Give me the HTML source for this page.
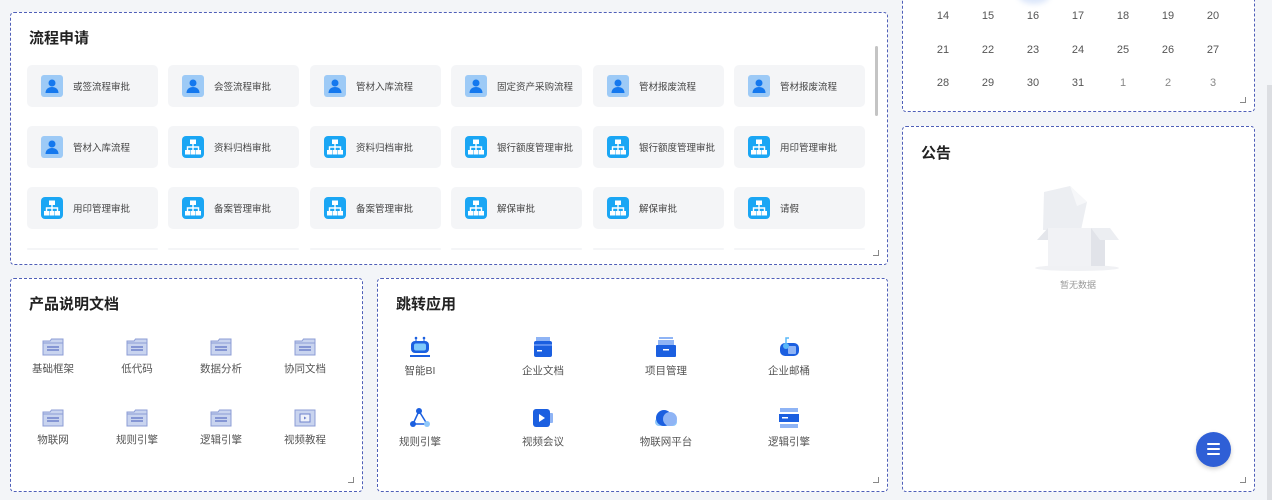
<!DOCTYPE html>
<html><head><meta charset="utf-8"><style>
*{box-sizing:border-box;margin:0;padding:0}
body{width:1272px;height:500px;overflow:hidden;background:#f3f5f8;font-family:"Liberation Sans","Noto Sans CJK SC",sans-serif;position:relative}
.p{position:absolute;background:#fff;border:1px dashed #4f5fb8;border-radius:4px}
.t{position:absolute;font-size:15px;font-weight:bold;color:#222}
.c{position:absolute;width:131px;height:42px;background:#f4f5f7;border-radius:5px}
.c svg{position:absolute;left:14px;top:10px}
.c span{position:absolute;left:46px;top:14px;font-size:9.5px;color:#444;white-space:nowrap}
.it{position:absolute;width:80px;text-align:center}
.it svg{display:block;margin:0 auto}
.it span{display:block;margin-top:5px;font-size:10.5px;color:#555}
.d{position:absolute;font-size:11px;color:#555;width:30px;text-align:center}
.cr{position:absolute;width:6px;height:6px;border-right:1px solid #888;border-bottom:1px solid #888}
</style></head><body>
<svg width="0" height="0" style="position:absolute"><defs>
<symbol id="u" viewBox="0 0 22 22"><rect width="22" height="22" rx="3" fill="#9dcaf6"/><circle cx="11" cy="8" r="3.5" fill="#1478ee"/><path d="M4.5 18c0-4 3-6 6.5-6s6.5 2 6.5 6z" fill="#1478ee"/></symbol>
<symbol id="o" viewBox="0 0 22 22"><rect width="22" height="22" rx="4" fill="#1aa6f4"/><rect x="8" y="3.5" width="6" height="4.5" fill="#fff"/><path d="M11 8v3M5.5 14v-3h11v3M11 11v3" stroke="#fff" stroke-width="1.4" fill="none"/><rect x="3" y="14" width="5" height="4.5" fill="#fff"/><rect x="8.5" y="14" width="5" height="4.5" fill="#fff"/><rect x="14" y="14" width="5" height="4.5" fill="#fff"/></symbol>
<symbol id="f" viewBox="0 0 22 18"><path d="M1 3h7l1.5-2H21v16H1z" fill="#c9d4ef" stroke="#8c9cd6" stroke-width="1"/><path d="M1 5h20" stroke="#8c9cd6"/><path d="M5 9h12M5 12h12" stroke="#6f82cc" stroke-width="1.4"/></symbol>
<symbol id="v" viewBox="0 0 22 18"><rect x="1" y="1" width="20" height="16" fill="#c9d4ef" stroke="#8c9cd6"/><rect x="6" y="5" width="10" height="8" fill="#eef1fa" stroke="#6f82cc"/><path d="M10 7.5v3l2.5-1.5z" fill="#6f82cc"/></symbol>
</defs></svg>

<div class="p" style="left:10px;top:12px;width:878px;height:253px;overflow:hidden">
<div class="t" style="left:18px;top:14px">流程申请</div>
<div style="position:absolute;left:864px;top:33px;width:3px;height:70px;background:#c4c4c4;border-radius:2px"></div>
<div class="cr" style="right:8px;bottom:8px"></div>
</div>
<div class="c" style="left:27px;top:65px"><svg width="22" height="22"><use href="#u"/></svg><span>或签流程审批</span></div>
<div class="c" style="left:168px;top:65px"><svg width="22" height="22"><use href="#u"/></svg><span>会签流程审批</span></div>
<div class="c" style="left:310px;top:65px"><svg width="22" height="22"><use href="#u"/></svg><span>管材入库流程</span></div>
<div class="c" style="left:451px;top:65px"><svg width="22" height="22"><use href="#u"/></svg><span>固定资产采购流程</span></div>
<div class="c" style="left:593px;top:65px"><svg width="22" height="22"><use href="#u"/></svg><span>管材报废流程</span></div>
<div class="c" style="left:734px;top:65px"><svg width="22" height="22"><use href="#u"/></svg><span>管材报废流程</span></div>
<div class="c" style="left:27px;top:126px"><svg width="22" height="22"><use href="#u"/></svg><span>管材入库流程</span></div>
<div class="c" style="left:168px;top:126px"><svg width="22" height="22"><use href="#o"/></svg><span>资料归档审批</span></div>
<div class="c" style="left:310px;top:126px"><svg width="22" height="22"><use href="#o"/></svg><span>资料归档审批</span></div>
<div class="c" style="left:451px;top:126px"><svg width="22" height="22"><use href="#o"/></svg><span>银行额度管理审批</span></div>
<div class="c" style="left:593px;top:126px"><svg width="22" height="22"><use href="#o"/></svg><span>银行额度管理审批</span></div>
<div class="c" style="left:734px;top:126px"><svg width="22" height="22"><use href="#o"/></svg><span>用印管理审批</span></div>
<div class="c" style="left:27px;top:187px"><svg width="22" height="22"><use href="#o"/></svg><span>用印管理审批</span></div>
<div class="c" style="left:168px;top:187px"><svg width="22" height="22"><use href="#o"/></svg><span>备案管理审批</span></div>
<div class="c" style="left:310px;top:187px"><svg width="22" height="22"><use href="#o"/></svg><span>备案管理审批</span></div>
<div class="c" style="left:451px;top:187px"><svg width="22" height="22"><use href="#o"/></svg><span>解保审批</span></div>
<div class="c" style="left:593px;top:187px"><svg width="22" height="22"><use href="#o"/></svg><span>解保审批</span></div>
<div class="c" style="left:734px;top:187px"><svg width="22" height="22"><use href="#o"/></svg><span>请假</span></div>
<div class="c" style="left:27px;top:248px;height:2px"></div><div class="c" style="left:168px;top:248px;height:2px"></div><div class="c" style="left:310px;top:248px;height:2px"></div><div class="c" style="left:451px;top:248px;height:2px"></div><div class="c" style="left:593px;top:248px;height:2px"></div><div class="c" style="left:734px;top:248px;height:2px"></div>

<div class="p" style="left:10px;top:278px;width:353px;height:214px"><div class="t" style="left:18px;top:14px">产品说明文档</div><div class="cr" style="right:8px;bottom:8px"></div></div>
<div class="it" style="left:13px;top:338px"><svg width="22" height="18"><use href="#f"/></svg><span>基础框架</span></div>
<div class="it" style="left:97px;top:338px"><svg width="22" height="18"><use href="#f"/></svg><span>低代码</span></div>
<div class="it" style="left:181px;top:338px"><svg width="22" height="18"><use href="#f"/></svg><span>数据分析</span></div>
<div class="it" style="left:265px;top:338px"><svg width="22" height="18"><use href="#f"/></svg><span>协同文档</span></div>
<div class="it" style="left:13px;top:409px"><svg width="22" height="18"><use href="#f"/></svg><span>物联网</span></div>
<div class="it" style="left:97px;top:409px"><svg width="22" height="18"><use href="#f"/></svg><span>规则引擎</span></div>
<div class="it" style="left:181px;top:409px"><svg width="22" height="18"><use href="#f"/></svg><span>逻辑引擎</span></div>
<div class="it" style="left:265px;top:409px"><svg width="22" height="18"><use href="#v"/></svg><span>视频教程</span></div>

<div class="p" style="left:377px;top:278px;width:511px;height:214px"><div class="t" style="left:18px;top:14px">跳转应用</div><div class="cr" style="right:8px;bottom:8px"></div></div>
<div class="it" style="left:380px;top:336px"><svg width="24" height="22" viewBox="0 0 24 22"><circle cx="8" cy="2" r="1.3" fill="#1b5fe0"/><circle cx="16" cy="2" r="1.3" fill="#1b5fe0"/><path d="M8 2v4M16 2v4" stroke="#1b5fe0"/><rect x="3" y="5" width="18" height="12" rx="4" fill="#1b5fe0"/><rect x="6" y="7.5" width="12" height="7" rx="2" fill="#7ec8fb"/><rect x="2" y="19" width="20" height="2" fill="#1b5fe0"/></svg><span>智能BI</span></div>
<div class="it" style="left:503px;top:336px"><svg width="24" height="22" viewBox="0 0 24 22"><rect x="5" y="1" width="14" height="8" fill="#8fb4f5"/><rect x="3" y="5" width="18" height="16" rx="2" fill="#1b5fe0"/><path d="M3 9h18" stroke="#5b8df0" stroke-width="2"/><rect x="6" y="14" width="5" height="1.5" fill="#fff"/></svg><span>企业文档</span></div>
<div class="it" style="left:626px;top:336px"><svg width="24" height="22" viewBox="0 0 24 22"><rect x="5" y="1" width="14" height="2" fill="#8fb4f5"/><rect x="4" y="4" width="16" height="5" fill="#8fb4f5"/><rect x="2" y="9" width="20" height="12" rx="1" fill="#1b5fe0"/><rect x="9" y="13" width="6" height="1.5" fill="#fff"/></svg><span>项目管理</span></div>
<div class="it" style="left:749px;top:336px"><svg width="24" height="22" viewBox="0 0 24 22"><rect x="3" y="7" width="19" height="13" rx="5" fill="#1b5fe0"/><rect x="11" y="10" width="8" height="8" rx="1" fill="#8fb4f5"/><circle cx="9" cy="10" r="3" fill="#5ab8f8"/><path d="M9 7V2h3" stroke="#5ab8f8" stroke-width="1.5" fill="none"/></svg><span>企业邮桶</span></div>
<div class="it" style="left:380px;top:407px"><svg width="24" height="22" viewBox="0 0 24 22"><path d="M11 4L5 17h14z" stroke="#1b5fe0" stroke-width="1.5" fill="none"/><circle cx="11" cy="4" r="3" fill="#1b5fe0"/><circle cx="5" cy="17" r="3" fill="#1b5fe0"/><circle cx="19" cy="17" r="3" fill="#8fc7fa"/></svg><span>规则引擎</span></div>
<div class="it" style="left:503px;top:407px"><svg width="24" height="22" viewBox="0 0 24 22"><rect x="17" y="6" width="5" height="10" rx="1" fill="#8fb4f5"/><rect x="2" y="2" width="17" height="18" rx="3" fill="#1b5fe0"/><path d="M8 7v8l6-4z" fill="#fff"/></svg><span>视频会议</span></div>
<div class="it" style="left:626px;top:407px"><svg width="26" height="22" viewBox="0 0 26 22"><rect x="2" y="11" width="22" height="8" rx="4" fill="#8fc7fa"/><circle cx="11" cy="11" r="8" fill="#1b5fe0"/><circle cx="17" cy="12" r="7" fill="#8fb4f5"/></svg><span>物联网平台</span></div>
<div class="it" style="left:749px;top:407px"><svg width="24" height="22" viewBox="0 0 24 22"><rect x="3" y="1" width="18" height="4" fill="#8fb4f5"/><rect x="2" y="7" width="20" height="8" fill="#1b5fe0"/><rect x="5" y="10" width="6" height="1.5" fill="#fff"/><rect x="3" y="17" width="18" height="4" fill="#8fb4f5"/></svg><span>逻辑引擎</span></div>

<div class="p" style="left:902px;top:-10px;width:353px;height:122px"><div class="cr" style="right:8px;bottom:8px"></div></div>
<div style="position:absolute;left:1018px;top:-14px;width:32px;height:18px;border-radius:50%;background:#dbe6fa;filter:blur(3px)"></div>
<div class="d" style="left:928px;top:10px">14</div><div class="d" style="left:973px;top:10px">15</div><div class="d" style="left:1018px;top:10px">16</div><div class="d" style="left:1063px;top:10px">17</div><div class="d" style="left:1108px;top:10px">18</div><div class="d" style="left:1153px;top:10px">19</div><div class="d" style="left:1198px;top:10px">20</div>
<div class="d" style="left:928px;top:44px">21</div><div class="d" style="left:973px;top:44px">22</div><div class="d" style="left:1018px;top:44px">23</div><div class="d" style="left:1063px;top:44px">24</div><div class="d" style="left:1108px;top:44px">25</div><div class="d" style="left:1153px;top:44px">26</div><div class="d" style="left:1198px;top:44px">27</div>
<div class="d" style="left:928px;top:77px">28</div><div class="d" style="left:973px;top:77px">29</div><div class="d" style="left:1018px;top:77px">30</div><div class="d" style="left:1063px;top:77px">31</div><div class="d" style="left:1108px;top:77px;color:#888">1</div><div class="d" style="left:1153px;top:77px;color:#888">2</div><div class="d" style="left:1198px;top:77px;color:#888">3</div>

<div class="p" style="left:902px;top:126px;width:353px;height:366px"><div class="t" style="left:18px;top:15px">公告</div><div class="cr" style="right:8px;bottom:8px"></div></div>
<svg style="position:absolute;left:1034px;top:184px" width="88" height="88" viewBox="0 0 88 88">
<ellipse cx="43" cy="84" rx="42" ry="3" fill="#f0f1f4"/>
<path d="M10 8l26-6 17 16-6 28-38 0z" fill="#eceef2"/>
<path d="M36 2l17 16-10 4z" fill="#f6f7f9"/>
<path d="M14 44h43v38H14z" fill="#f1f2f5"/><path d="M57 44h14v38H57z" fill="#e1e3e9"/>
<path d="M3 56l11-12v12z" fill="#e4e6eb"/><path d="M57 44h19l9 12H66z" fill="#eceef2"/>
</svg>
<div style="position:absolute;left:1040px;top:278px;width:76px;text-align:center;font-size:9px;color:#999">暂无数据</div>
<div style="position:absolute;left:1196px;top:432px;width:35px;height:35px;border-radius:50%;background:#2f5fd6;box-shadow:0 2px 5px rgba(0,0,0,.2)"><div style="position:absolute;left:11px;top:11px;width:13px;height:2px;background:#fff;box-shadow:0 5px 0 #fff,0 10px 0 #fff;border-radius:1px"></div></div>
<div style="position:absolute;left:1267px;top:85px;width:5px;height:415px;background:#dcdee2"></div>
</body></html>
